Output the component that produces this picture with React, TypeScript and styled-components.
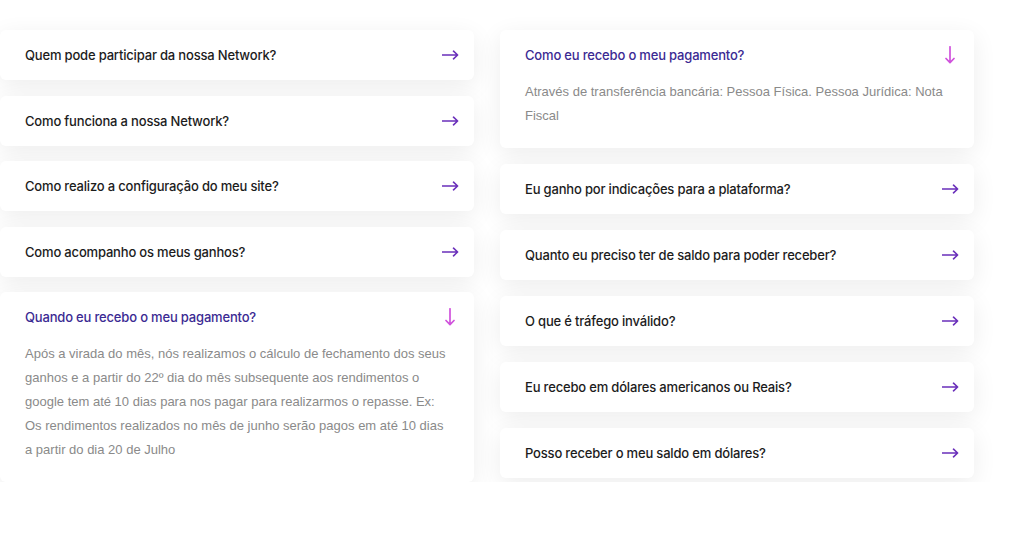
import React from "react";
import styled, { createGlobalStyle } from "styled-components";

const Global = createGlobalStyle`
  html, body { margin: 0; padding: 0; background: #ffffff; }
  body { font-family: Inter, "Noto Sans", sans-serif; -webkit-font-smoothing: antialiased; }
`;

const Page = styled.div`
  display: grid;
  grid-template-columns: 474px 474px;
  column-gap: 26px;
  align-items: start;
  padding-top: 30px;
`;

const Column = styled.div<{ $gap: number }>`
  display: flex;
  flex-direction: column;
  gap: ${(p) => p.$gap}px;
`;

const Card = styled.div`
  background: #ffffff;
  border-radius: 6px;
  box-shadow: 0 6px 24px rgba(0, 0, 0, 0.075);
`;

const Header = styled.div`
  height: 50px;
  display: flex;
  align-items: center;
  justify-content: space-between;
  padding: 0 15px 0 25px;
`;

const Title = styled.span<{ $open?: boolean }>`
  font-size: 13px;
  font-weight: 500;
  color: ${(p) => (p.$open ? "#3b2a93" : "#1c1c1c")};
  letter-spacing: -0.18px;
`;

const Body = styled.p`
  margin: 0;
  padding: 0 25px 20px 25px;
  font-family: "Liberation Sans", Arial, sans-serif;
  font-size: 13px;
  line-height: 24px;
  color: #8a8a8a;
`;

const Icon = styled.svg`
  display: block;
  flex-shrink: 0;
`;

const DownIcon = styled(Icon)`
  margin-right: 3px;
`;

const ArrowRight = () => (
  <Icon width="17" height="10" viewBox="0 0 17 10">
    <path d="M0.5 5 H15.5 M11.5 1.2 L15.6 5 L11.5 8.8" fill="none" stroke="#6a2fba" strokeWidth="1.6" strokeLinecap="round" strokeLinejoin="round" />
  </Icon>
);

const ArrowDown = () => (
  <DownIcon width="12" height="18" viewBox="0 0 12 18">
    <path d="M6 0.8 V16.5 M2 12.5 L6 16.6 L10 12.5" fill="none" stroke="#d052dc" strokeWidth="1.7" strokeLinecap="round" strokeLinejoin="round" />
  </DownIcon>
);

type Item = { q: string; a?: string };

const left: Item[] = [
  { q: "Quem pode participar da nossa Network?" },
  { q: "Como funciona a nossa Network?" },
  { q: "Como realizo a configuração do meu site?" },
  { q: "Como acompanho os meus ganhos?" },
  {
    q: "Quando eu recebo o meu pagamento?",
    a: "Após a virada do mês, nós realizamos o cálculo de fechamento dos seus ganhos e a partir do 22º dia do mês subsequente aos rendimentos o google tem até 10 dias para nos pagar para realizarmos o repasse. Ex: Os rendimentos realizados no mês de junho serão pagos em até 10 dias a partir do dia 20 de Julho",
  },
];

const right: Item[] = [
  {
    q: "Como eu recebo o meu pagamento?",
    a: "Através de transferência bancária: Pessoa Física. Pessoa Jurídica: Nota Fiscal",
  },
  { q: "Eu ganho por indicações para a plataforma?" },
  { q: "Quanto eu preciso ter de saldo para poder receber?" },
  { q: "O que é tráfego inválido?" },
  { q: "Eu recebo em dólares americanos ou Reais?" },
  { q: "Posso receber o meu saldo em dólares?" },
];

const Faq = ({ item }: { item: Item }) => (
  <Card>
    <Header>
      <Title $open={!!item.a}>{item.q}</Title>
      {item.a ? <ArrowDown /> : <ArrowRight />}
    </Header>
    {item.a && <Body>{item.a}</Body>}
  </Card>
);

export default function App() {
  return (
    <>
      <Global />
      <Page>
        <Column $gap={15.5}>
          {left.map((i) => (
            <Faq key={i.q} item={i} />
          ))}
        </Column>
        <Column $gap={16}>
          {right.map((i) => (
            <Faq key={i.q} item={i} />
          ))}
        </Column>
      </Page>
    </>
  );
}
